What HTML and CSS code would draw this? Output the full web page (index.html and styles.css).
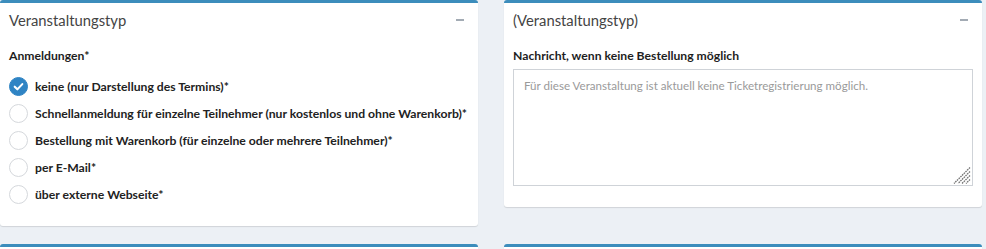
FILE: index.html
```html
<!DOCTYPE html>
<html lang="de">
<head>
    <meta charset="UTF-8">
    <title>Veranstaltungstyp</title>
    <link rel="stylesheet" href="styles.css">
</head>
<body>
    <div class="card-grid">
        <div class="card">
            <div class="card-header">
                <h3 class="card-title">Veranstaltungstyp</h3>
                <span class="card-tool"></span>
            </div>
            <div class="card-body">
                <label class="field-label">Anmeldungen*</label>
                <div class="radio-list">
                    <label class="radio-row">
                        <span class="radio checked">
                            <svg viewBox="0 0 20 20" width="19" height="19"><polyline points="6,10.2 8.8,13 14,7.5" fill="none" stroke="#fff" stroke-width="2.2" stroke-linecap="round" stroke-linejoin="round"/></svg>
                        </span>
                        keine (nur Darstellung des Termins)*
                    </label>
                    <label class="radio-row">
                        <span class="radio"></span>
                        Schnellanmeldung für einzelne Teilnehmer (nur kostenlos und ohne Warenkorb)*
                    </label>
                    <label class="radio-row">
                        <span class="radio"></span>
                        Bestellung mit Warenkorb (für einzelne oder mehrere Teilnehmer)*
                    </label>
                    <label class="radio-row">
                        <span class="radio"></span>
                        per E-Mail*
                    </label>
                    <label class="radio-row">
                        <span class="radio"></span>
                        über externe Webseite*
                    </label>
                </div>
            </div>
        </div>

        <div class="card">
            <div class="card-header">
                <h3 class="card-title">(Veranstaltungstyp)</h3>
                <span class="card-tool"></span>
            </div>
            <div class="card-body card-body-short">
                <label class="field-label" for="noOrderMessage">Nachricht, wenn keine Bestellung möglich</label>
                <div class="message-wrap">
                    <textarea id="noOrderMessage" class="message-box" placeholder="Für diese Veranstaltung ist aktuell keine Ticketregistrierung möglich."></textarea>
                    <!-- resize grip -->
                    <svg class="grip" viewBox="0 0 18 17" width="18" height="17">
                        <g stroke="#6f6f6f" stroke-width="1.3" stroke-dasharray="1.6 0.8" fill="none">
                            <line x1="17" y1="0.5" x2="1" y2="16.5"/>
                            <line x1="17" y1="4.5" x2="5" y2="16.5"/>
                            <line x1="17" y1="8.5" x2="9" y2="16.5"/>
                            <line x1="17" y1="12.5" x2="13" y2="16.5"/>
                        </g>
                    </svg>
                </div>
            </div>
        </div>

        <div class="card">
            <div class="card-header">
                <h3 class="card-title">&nbsp;</h3>
            </div>
        </div>

        <div class="card">
            <div class="card-header">
                <h3 class="card-title">&nbsp;</h3>
            </div>
        </div>
    </div>
</body>
</html>
```

FILE: styles.css
```css
body {
    margin: 0;
    background-color: #ecf0f5;
    font-family: Lato, "Open Sans", sans-serif;
    color: #333;
}
.card-grid {
    display: grid;
    grid-template-columns: 478px 478px;
    column-gap: 26px;
    row-gap: 18px;
    align-items: start;
}
.card {
    background-color: #fff;
    border-top: 3px solid #3c8dbc;
    border-radius: 3px;
    box-shadow: 0 1px 1px rgba(0,0,0,0.12);
}
.card-header {
    display: flex;
    align-items: center;
    justify-content: space-between;
    height: 34px;
    padding: 0 14px 0 9px;
}
.card-title {
    margin: 0;
    font-size: 14.8px;
    font-weight: normal;
    color: #444;
    line-height: 34px;
}
.card-tool {
    width: 8px;
    height: 2px;
    background-color: #a3abb4;
}
.card-body {
    padding: 11px 9px 22px 9px;
}
.card-body-short {
    padding-bottom: 21px;
}
.field-label {
    display: block;
    font-size: 12.2px;
    font-weight: bold;
    line-height: 16px;
    color: #1e1e1e;
}
.radio-list {
    display: flex;
    flex-direction: column;
    gap: 8px;
    margin-top: 13px;
}
.radio-row {
    display: flex;
    align-items: center;
    gap: 7px;
    height: 19px;
    font-size: 12.2px;
    font-weight: bold;
    color: #222;
}
.radio {
    box-sizing: border-box;
    width: 19px;
    height: 19px;
    border: 1px solid #d5d8dc;
    border-radius: 50%;
    background-color: #fff;
    flex-shrink: 0;
}
.radio.checked {
    border-color: #2f84c4;
    background-color: #2f84c4;
}
.radio svg {
    display: block;
    margin: -1px;
}
.message-wrap {
    position: relative;
    width: 460px;
    margin-top: 5px;
}
.message-box {
    display: block;
    box-sizing: border-box;
    width: 460px;
    height: 117px;
    margin: 0;
    padding: 8px 10px;
    border: 1px solid #cfd3d8;
    border-radius: 0;
    font-family: Lato, "Open Sans", sans-serif;
    font-size: 11.6px;
    line-height: 15px;
    resize: none;
}
.message-box::placeholder {
    color: #9a9a9a;
}
.grip {
    position: absolute;
    right: 2px;
    bottom: 2px;
    pointer-events: none;
}
```
